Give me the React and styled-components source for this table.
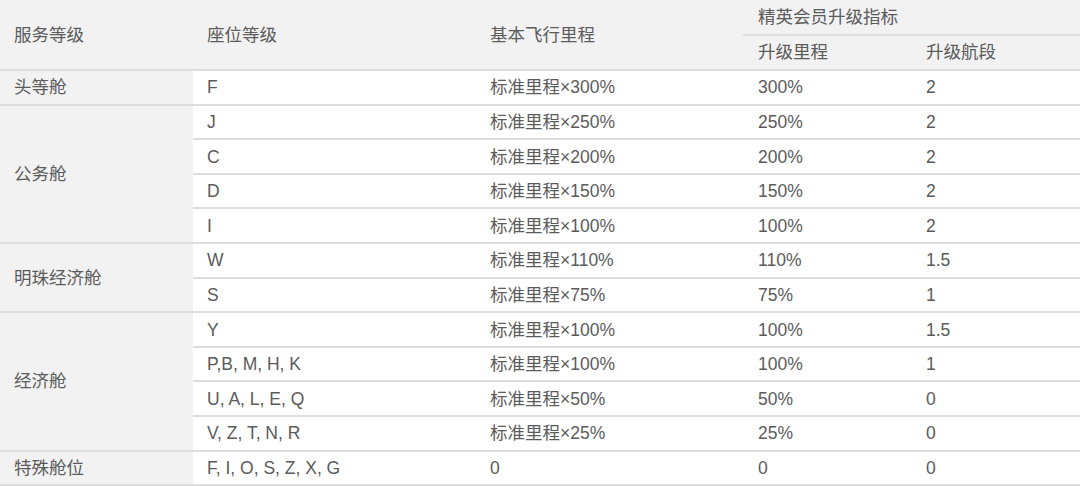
import styled, { createGlobalStyle } from "styled-components";

const GlobalStyle = createGlobalStyle`
  html, body {
    margin: 0;
    padding: 0;
    background: #ffffff;
  }
  body {
    font-family: "Liberation Sans", "Noto Sans CJK SC", sans-serif;
    color: #5b5b5b;
  }
`;

const Table = styled.table`
  width: 1080px;
  border-collapse: collapse;
  table-layout: fixed;
  font-size: 17.5px;
  line-height: 20px;
  color: #5b5b5b;
`;

const HeadCell = styled.th`
  background: #f2f2f2;
  font-weight: normal;
  text-align: left;
  padding: 0 0 0 ${(p) => p.$pad || 14}px;
  height: ${(p) => p.$h || 34}px;
  border-bottom: ${(p) => (p.$line ? "2px solid #dedede" : "none")};
  vertical-align: middle;
  white-space: nowrap;
`;

const SubHeadCell = styled(HeadCell)`
  border-bottom: 2px solid #dedede;
`;

const Cell = styled.td`
  background: ${(p) => (p.$gray ? "#f2f2f2" : "#ffffff")};
  padding: 0 0 0 ${(p) => p.$pad || 14}px;
  height: 32.62px;
  border-bottom: 2px solid #dedede;
  vertical-align: middle;
  white-space: nowrap;
`;

const groups = [
  { name: "头等舱", rows: [["F", "标准里程×300%", "300%", "2"]] },
  {
    name: "公务舱",
    rows: [
      ["J", "标准里程×250%", "250%", "2"],
      ["C", "标准里程×200%", "200%", "2"],
      ["D", "标准里程×150%", "150%", "2"],
      ["I", "标准里程×100%", "100%", "2"],
    ],
  },
  {
    name: "明珠经济舱",
    rows: [
      ["W", "标准里程×110%", "110%", "1.5"],
      ["S", "标准里程×75%", "75%", "1"],
    ],
  },
  {
    name: "经济舱",
    rows: [
      ["Y", "标准里程×100%", "100%", "1.5"],
      ["P,B, M, H, K", "标准里程×100%", "100%", "1"],
      ["U, A, L, E, Q", "标准里程×50%", "50%", "0"],
      ["V, Z, T, N, R", "标准里程×25%", "25%", "0"],
    ],
  },
  { name: "特殊舱位", rows: [["F, I, O, S, Z, X, G", "0", "0", "0"]] },
];

export default function App() {
  return (
    <>
      <GlobalStyle />
      <Table>
        <colgroup>
          <col style={{ width: 193 }} />
          <col style={{ width: 283 }} />
          <col style={{ width: 267 }} />
          <col style={{ width: 169 }} />
          <col style={{ width: 168 }} />
        </colgroup>
        <thead>
          <tr>
            <HeadCell rowSpan={2} $line>服务等级</HeadCell>
            <HeadCell rowSpan={2} $line>座位等级</HeadCell>
            <HeadCell rowSpan={2} $line>基本飞行里程</HeadCell>
            <SubHeadCell colSpan={2} $pad={15} $h={33.5}>
              精英会员升级指标
            </SubHeadCell>
          </tr>
          <tr>
            <SubHeadCell $pad={15} $h={33.5}>升级里程</SubHeadCell>
            <SubHeadCell $h={33.5}>升级航段</SubHeadCell>
          </tr>
        </thead>
        <tbody>
          {groups.map((g) =>
            g.rows.map((r, i) => (
              <tr key={g.name + i}>
                {i === 0 && (
                  <Cell $gray rowSpan={g.rows.length}>
                    {g.name}
                  </Cell>
                )}
                <Cell>{r[0]}</Cell>
                <Cell>{r[1]}</Cell>
                <Cell $pad={15}>{r[2]}</Cell>
                <Cell>{r[3]}</Cell>
              </tr>
            ))
          )}
        </tbody>
      </Table>
    </>
  );
}
